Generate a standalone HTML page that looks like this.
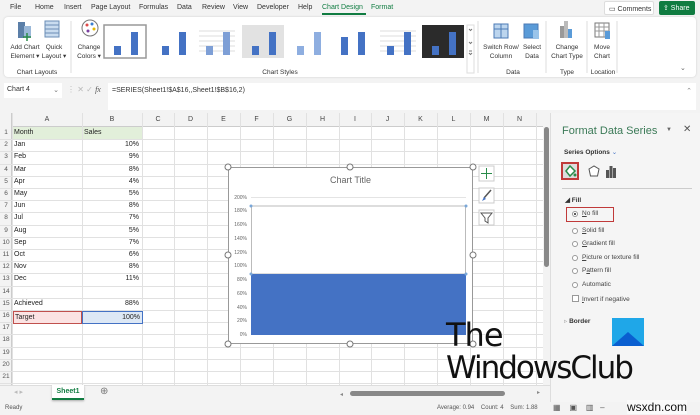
<html><head><style>
*{margin:0;padding:0;box-sizing:border-box;white-space:nowrap}
body{width:700px;height:415px;overflow:hidden;background:#f3f3f3;font-family:"Liberation Sans",sans-serif;font-size:8px;color:#333;position:relative}
.a{position:absolute}
.tab{position:absolute;top:4px;font-size:7px;color:#333}
.cell{position:absolute;font-size:7px;color:#222}
.gl{position:absolute;background:#e1e1e1}
.rb{position:absolute;font-size:6.5px;text-align:center;color:#333;line-height:9px}
.opt{position:absolute;left:572px;font-size:6.5px;color:#444}
.rad{position:absolute;left:572px;width:6px;height:6px;border:1px solid #999;border-radius:50%;background:#fff}
</style></head><body>
<div class="tab" style="left:10px">File</div>
<div class="tab" style="left:35px">Home</div>
<div class="tab" style="left:64px">Insert</div>
<div class="tab" style="left:91px">Page Layout</div>
<div class="tab" style="left:139px">Formulas</div>
<div class="tab" style="left:177px">Data</div>
<div class="tab" style="left:202px">Review</div>
<div class="tab" style="left:233px">View</div>
<div class="tab" style="left:257px">Developer</div>
<div class="tab" style="left:298px">Help</div>
<div class="tab" style="left:322px;color:#107c41">Chart Design</div>
<div class="a" style="left:322px;top:13px;width:44px;height:2px;background:#107c41"></div>
<div class="tab" style="left:371px;color:#107c41">Format</div>
<div class="a" style="left:604px;top:1px;width:50px;height:14px;background:#fff;border:1px solid #ddd;border-radius:2px;font-size:7px;padding:3px 4px">▭ Comments</div>
<div class="a" style="left:659px;top:1px;width:36px;height:14px;background:#107c41;color:#fff;border-radius:2px;font-size:7px;padding:3px 4px">⇪ Share</div>
<div class="a" style="left:4px;top:17px;width:692px;height:60px;background:#fff;border-radius:4px;box-shadow:0 0 2px #ccc"></div>
<svg class="a" style="left:0;top:17px" width="700" height="60">
<rect x="18" y="5" width="7" height="16" fill="#5b7fa8"/><rect x="24" y="9" width="7" height="12" fill="#9ab8d8"/><path d="M27 16v8M23 20h8" stroke="#2a8c4a" stroke-width="1.5"/>
<rect x="45" y="4" width="14" height="16" fill="#c9dcef" stroke="#6a8db5"/><path d="M45 8h14M45 12h14M45 16h14" stroke="#6a8db5"/>
<circle cx="90" cy="11" r="8" fill="#fff" stroke="#777"/><circle cx="87" cy="8" r="1.5" fill="#e04a4a"/><circle cx="92" cy="7" r="1.5" fill="#3a7fd0"/><circle cx="94" cy="12" r="1.5" fill="#e6b800"/><circle cx="88" cy="14" r="1.5" fill="#7b3fa0"/>
<line x1="71" y1="4" x2="71" y2="56" stroke="#ddd"/>
<line x1="478" y1="4" x2="478" y2="56" stroke="#ddd"/><line x1="546" y1="4" x2="546" y2="56" stroke="#ddd"/><line x1="587" y1="4" x2="587" y2="56" stroke="#ddd"/><line x1="617" y1="4" x2="617" y2="56" stroke="#ddd"/>
<rect x="494" y="7" width="14" height="14" fill="#bcd5ee" stroke="#4b7ab5"/><path d="M494 12h14M501 7v14" stroke="#4b7ab5"/>
<rect x="524" y="7" width="14" height="14" fill="#5a9bd8" stroke="#4b7ab5"/><rect x="533" y="13" width="6" height="9" fill="#9ac4ea"/>
<rect x="560" y="9" width="4" height="12" fill="#999"/><rect x="564" y="4" width="4" height="17" fill="#bbb"/><rect x="568" y="12" width="4" height="9" fill="#5a9bd8"/>
<rect x="595" y="6" width="14" height="14" fill="#fff" stroke="#777"/><path d="M595 10h14M595 14h14M599 6v14M604 6v14" stroke="#999"/><rect x="605" y="14" width="5" height="8" fill="#5a9bd8"/>
<rect x="467" y="8" width="7" height="48" fill="#fff" stroke="#ddd"/><path d="M469 12l1.5 1.5 1.5-1.5M469 25l1.5 1.5 1.5-1.5M469 34h3M469 36l1.5 1.5 1.5-1.5" stroke="#777" fill="none"/>
<g id="th"></g>
</svg>
<script>
var xs=[104,152,196,242,287,331,377],s='';
xs.forEach(function(x,i){var bg=i==3?'#e2e2e2':'#fff',c=i==4?'#8eaee0':(i==2?'#7e9fd6':'#4472c4');
s+='<rect x="'+x+'" y="8" width="42" height="33" fill="'+bg+'"'+(i==0?' stroke="#999" stroke-width="1.5"':'')+'/>';
if(i==2||i==6)for(var k=0;k<5;k++)s+='<line x1="'+(x+3)+'" x2="'+(x+39)+'" y1="'+(14+k*5)+'" y2="'+(14+k*5)+'" stroke="#ddd"/>';
s+='<rect x="'+(x+10)+'" y="'+(i==5?20:29)+'" width="7" height="'+(i==5?18:9)+'" fill="'+c+'"/><rect x="'+(x+27)+'" y="15" width="7" height="23" fill="'+c+'"/>';});
s+='<rect x="422" y="8" width="42" height="33" fill="#2b2b2b"/><rect x="432" y="29" width="7" height="9" fill="#4472c4"/><rect x="449" y="15" width="7" height="23" fill="#4472c4"/>';
document.getElementById('th').innerHTML=s;
</script>
<div class="rb" style="left:6px;top:43px;width:38px">Add Chart<br>Element ▾</div>
<div class="rb" style="left:41px;top:43px;width:26px">Quick<br>Layout ▾</div>
<div class="rb" style="left:74px;top:43px;width:30px">Change<br>Colors ▾</div>
<div class="rb" style="left:4px;top:68px;width:66px">Chart Layouts</div>
<div class="rb" style="left:230px;top:68px;width:100px">Chart Styles</div>
<div class="rb" style="left:482px;top:43px;width:38px">Switch Row/<br>Column</div>
<div class="rb" style="left:520px;top:43px;width:24px">Select<br>Data</div>
<div class="rb" style="left:490px;top:68px;width:46px">Data</div>
<div class="rb" style="left:548px;top:43px;width:38px">Change<br>Chart Type</div>
<div class="rb" style="left:548px;top:68px;width:38px">Type</div>
<div class="rb" style="left:589px;top:43px;width:26px">Move<br>Chart</div>
<div class="rb" style="left:587px;top:68px;width:32px">Location</div>
<div class="a" style="left:680px;top:64px;font-size:7px;color:#666">⌄</div>
<div class="a" style="left:4px;top:83px;width:58px;height:15px;background:#fff;font-size:7px;padding:3px 3px">Chart 4 <span style="float:right;color:#777">⌄</span></div>
<div class="a" style="left:67px;top:85px;font-size:8px;color:#bbb">⋮ ✕ ✓ <i style="color:#555;font-family:'Liberation Serif'">fx</i></div>
<div class="a" style="left:108px;top:83px;width:588px;height:27px;background:#fff;font-size:7px;padding:4px 4px">=SERIES(Sheet1!$A$16,,Sheet1!$B$16,2)<span style="float:right;color:#888">⌃</span></div>
<div class="a" style="left:0;top:113px;width:550px;height:272px;background:#fff"></div>
<div class="a" style="left:0;top:113px;width:543px;height:14px;background:#f3f3f3;border-bottom:1px solid #ccc"></div>
<div class="a" style="left:0;top:113px;width:12px;height:272px;background:#f3f3f3;border-right:1px solid #ccc"></div>
<div class="a" style="left:13px;top:127px;width:129px;height:12px;background:#e2efda"></div>
<div id="g"></div>
<script>
var h='',cols=[12,82,142,174,207,240,273,306,339,371,404,437,470,503,536],L='ABCDEFGHIJKLMN';
for(var i=0;i<cols.length;i++){h+='<div class="gl" style="left:'+cols[i]+'px;top:113px;width:1px;height:272px"></div>';if(i<14)h+='<div class="cell" style="left:'+cols[i]+'px;top:116px;width:'+(cols[i+1]-cols[i])+'px;text-align:center;color:#444">'+L[i]+'</div>';}
var A=['Month','Jan','Feb','Mar','Apr','May','Jun','Jul','Aug','Sep','Oct','Nov','Dec','','Achieved','Target','','','','',''];
var B=['Sales','10%','9%','8%','4%','5%','8%','7%','5%','7%','6%','8%','11%','','88%','100%','','','','',''];
for(var r=0;r<21;r++){var y=127+r*12.2;h+='<div class="gl" style="left:0;top:'+(y+12.2)+'px;width:543px;height:1px"></div>';h+='<div class="cell" style="left:0;top:'+(y+2)+'px;width:12px;text-align:center;color:#555;font-size:6.5px">'+(r+1)+'</div>';
if(r!=15)h+='<div class="cell" style="left:14px;top:'+(y+2)+'px">'+A[r]+'</div><div class="cell" style="left:82px;top:'+(y+2)+'px;width:59px;text-align:'+(r?'right':'left')+';padding:0 2px">'+B[r]+'</div>';}
document.getElementById('g').innerHTML=h;
</script>
<div class="a" style="left:13px;top:311px;width:69px;height:13px;background:#fbe3e3;border:1px solid #c0504d;font-size:7px;padding:2px 1px;color:#222">Target</div>
<div class="a" style="left:82px;top:311px;width:61px;height:13px;background:#dde8f5;border:1px solid #4472c4;font-size:7px;padding:2px 2px;text-align:right;color:#222">100%</div>
<div class="a" style="left:543px;top:113px;width:7px;height:272px;background:#f3f3f3"></div>
<div class="a" style="left:544px;top:127px;width:5px;height:140px;background:#888;border-radius:3px"></div>
<div class="a" style="left:228px;top:167px;width:245px;height:177px;background:#fff;border:1px solid #999"></div>
<div class="a" style="left:228px;top:175px;width:245px;text-align:center;font-size:9px;color:#666">Chart Title</div>
<svg class="a" style="left:220px;top:160px" width="260" height="190">
<g font-size="5" fill="#666" text-anchor="end" font-family="Liberation Sans">
<text x="27" y="39">200%</text><text x="27" y="52">180%</text><text x="27" y="66">160%</text><text x="27" y="80">140%</text><text x="27" y="94">120%</text><text x="27" y="107">100%</text><text x="27" y="121">80%</text><text x="27" y="135">60%</text><text x="27" y="149">40%</text><text x="27" y="162">20%</text><text x="27" y="176">0%</text></g>
<g stroke="#e4e4e4"><path d="M31 37.5h215M31 51h215M31 65h215M31 79h215M31 93h215M31 106h215M31 120h215M31 134h215M31 148h215M31 161h215"/></g>
<rect x="31.5" y="46" width="214" height="68" fill="#fff" stroke="#bbb"/>
<rect x="31" y="114" width="215" height="61" fill="#4472c4"/>
<g fill="#7aa7d8"><circle cx="31" cy="46" r="1.5"/><circle cx="246" cy="46" r="1.5"/><circle cx="31" cy="114" r="1.5"/><circle cx="246" cy="114" r="1.5"/></g>
<g fill="#fff" stroke="#777"><circle cx="8" cy="7" r="3"/><circle cx="130" cy="7" r="3"/><circle cx="253" cy="7" r="3"/><circle cx="8" cy="95" r="3"/><circle cx="253" cy="95" r="3"/><circle cx="8" cy="184" r="3"/><circle cx="130" cy="184" r="3"/><circle cx="253" cy="184" r="3"/></g>
</svg>
<svg class="a" style="left:478px;top:165px" width="18" height="68">
<rect x="1" y="1" width="15" height="15" fill="#fff" stroke="#ccc"/><path d="M8.5 3v11M3 8.5h11" stroke="#2a8c4a"/>
<rect x="1" y="23" width="15" height="15" fill="#fff" stroke="#ccc"/><path d="M13 25l-7 8" stroke="#555" stroke-width="1.5"/><path d="M4 36l2-4 2 2z" fill="#4472c4"/>
<rect x="1" y="45" width="15" height="15" fill="#fff" stroke="#ccc"/><path d="M3 48h11l-4 5v5l-3-2v-3z" fill="none" stroke="#555"/>
</svg>
<div class="a" style="left:0;top:385px;width:550px;height:17px;background:#f3f3f3;border-top:1px solid #ddd"></div>
<div class="a" style="left:14px;top:388px;font-size:7px;color:#bbb">◂ ▸</div>
<div class="a" style="left:52px;top:385px;width:32px;height:15px;background:#fff;color:#107c41;font-weight:bold;font-size:7px;text-align:center;padding-top:3px;border-bottom:2px solid #107c41;box-shadow:0 1px 2px #aaa">Sheet1</div>
<div class="a" style="left:100px;top:386px;font-size:10px;color:#777">⊕</div>
<div class="a" style="left:340px;top:391px;font-size:6px;color:#888">◂</div>
<div class="a" style="left:350px;top:391px;width:155px;height:5px;background:#888;border-radius:3px"></div>
<div class="a" style="left:537px;top:389px;font-size:6px;color:#888">▸</div>
<div class="a" style="left:5px;top:405px;font-size:6px;color:#555">Ready</div>
<div class="a" style="left:437px;top:405px;font-size:6px;color:#555">Average: 0.94 &nbsp;&nbsp; Count: 4 &nbsp;&nbsp; Sum: 1.88</div>
<div class="a" style="left:553px;top:403px;font-size:8px;color:#555">▦ &nbsp;&nbsp; ▣ &nbsp;&nbsp; ▥ &nbsp; –</div>
<div class="a" style="left:550px;top:113px;width:150px;height:289px;background:#f5f5f5;border-left:1px solid #ddd"></div>
<div class="a" style="left:562px;top:125px;font-size:11px;color:#3b7a57">Format Data Series</div>
<div class="a" style="left:666px;top:127px;font-size:6px;color:#666">▼</div>
<div class="a" style="left:683px;top:124px;font-size:10px;color:#555">✕</div>
<div class="a" style="left:564px;top:148px;font-size:6.5px;font-weight:bold;color:#333">Series Options <span style="color:#4472c4;font-weight:normal">⌄</span></div>
<div class="a" style="left:561px;top:162px;width:18px;height:18px;border:2px solid #c03a3a;background:#ddd"></div>
<svg class="a" style="left:561px;top:162px" width="60" height="20">
<path d="M5 9l4-5 5 5-5 5z" fill="#fff" stroke="#2a8c4a" stroke-width="1.5"/><circle cx="14" cy="13" r="1.5" fill="#2a8c4a"/>
<path d="M28 7l5-3 5 3-1.5 7h-7z" fill="#fff" stroke="#555"/>
<rect x="45" y="8" width="3" height="8" fill="#555"/><rect x="48.5" y="4" width="3" height="12" fill="#555"/><rect x="52" y="6" width="3" height="10" fill="#555"/>
</svg>
<div class="a" style="left:562px;top:188px;width:130px;height:1px;background:#ccc"></div>
<div class="a" style="left:565px;top:196px;font-size:6.5px;font-weight:bold;color:#333">◢ Fill</div>
<div class="a" style="left:566px;top:207px;width:48px;height:15px;border:1.5px solid #c03a3a;background:#f5f5f5"></div>
<div class="rad" style="top:211px;background:radial-gradient(#444 35%,#fff 40%)"></div>
<div class="opt" style="left:582px;top:210px"><u>N</u>o fill</div>
<div class="rad" style="top:228px"></div><div class="opt" style="left:582px;top:227px"><u>S</u>olid fill</div>
<div class="rad" style="top:241px"></div><div class="opt" style="left:582px;top:240px"><u>G</u>radient fill</div>
<div class="rad" style="top:255px"></div><div class="opt" style="left:582px;top:254px"><u>P</u>icture or texture fill</div>
<div class="rad" style="top:268px"></div><div class="opt" style="left:582px;top:267px">P<u>a</u>ttern fill</div>
<div class="rad" style="top:282px"></div><div class="opt" style="left:582px;top:281px">Automatic</div>
<div class="a" style="left:572px;top:295px;width:7px;height:7px;border:1px solid #999;background:#fff"></div>
<div class="opt" style="left:582px;top:296px"><u>I</u>nvert if negative</div>
<div class="a" style="left:564px;top:317px;font-size:6.5px;font-weight:bold;color:#333"><span style="color:#999;font-weight:normal">▹</span> Border</div>
<svg class="a" style="left:612px;top:318px" width="32" height="28"><path d="M0 0h32v28H0z" fill="#1fa7e8"/><path d="M0 28L16 14 32 28z" fill="#0a5fd0"/></svg>
<div class="a" style="left:446px;top:318px;font-size:32px;line-height:34px;color:#111;font-family:'DejaVu Sans',sans-serif;letter-spacing:-1px">The</div>
<div class="a" style="left:446px;top:351px;font-size:31px;line-height:34px;color:#111;font-family:'DejaVu Sans',sans-serif;letter-spacing:-2px">WindowsClub</div>
<div class="a" style="left:627px;top:400px;font-size:12px;color:#111;background:rgba(255,255,255,.6)">wsxdn.com</div>
</body></html>
